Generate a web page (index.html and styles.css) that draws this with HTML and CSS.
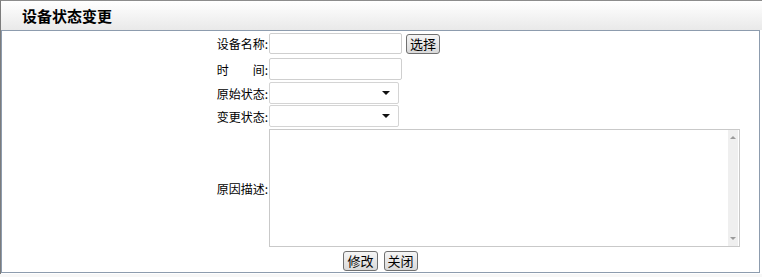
FILE: index.html
```html
<!DOCTYPE html>
<html lang="zh-CN">
<head>
    <meta charset="UTF-8">
    <title>设备状态变更</title>
    <link rel="stylesheet" href="styles.css">
</head>
<body>

    <div class="panel">
        <div class="panel-title">设备状态变更</div>

        <div class="panel-body">
            <div class="row row-name">
                <label class="label">设备名称:</label>
                <div class="field">
                    <input type="text" class="text-input">
                    <button class="btn btn-pick">选择</button>
                </div>
            </div>
            <div class="row row-time">
                <label class="label">时&emsp;&emsp;间:</label>
                <div class="field">
                    <input type="text" class="text-input">
                </div>
            </div>
            <div class="row row-old">
                <label class="label">原始状态:</label>
                <div class="field">
                    <div class="select-box"><span class="arrow"></span></div>
                </div>
            </div>
            <div class="row row-new">
                <label class="label">变更状态:</label>
                <div class="field">
                    <div class="select-box"><span class="arrow"></span></div>
                </div>
            </div>
            <div class="row row-desc">
                <label class="label">原因描述:</label>
                <div class="field">
                    <div class="memo">
                        <textarea class="memo-text"></textarea>
                        <div class="scroll">
                            <span class="scroll-up"></span>
                            <span class="scroll-down"></span>
                        </div>
                    </div>
                </div>
            </div>
            <div class="actions">
                <button class="btn">修改</button>
                <button class="btn">关闭</button>
            </div>
        </div>
    </div>

</body>
</html>
```

FILE: styles.css
```css
body {
    margin: 0;
    background: #f7f7f7;
    font-family: "Noto Sans CJK SC", "DejaVu Sans", sans-serif;
    font-size: 12px;
    color: #000;
}
.panel {
    width: 761px;
    height: 273px;
    border-top: 1px solid #8c8c8c;
    border-left: 1px solid #7c7c7c;
    background: #fff;
}
.panel-title {
    height: 29px;
    line-height: 30px;
    padding-left: 21px;
    font-size: 15px;
    font-weight: bold;
    background: linear-gradient(#ffffff, #e9e9e9);
}
.panel-body {
    width: 757px;
    height: 241px;
    border: 1px solid #8d9cae;
    background: #fff;
}
.row {
    display: flex;
    align-items: center;
}
.row-name { margin-top: 2px; height: 21px; }
.row-time { margin-top: 4px; height: 22px; }
.row-old { margin-top: 2px; height: 22px; }
.row-new { margin-top: 1px; height: 22px; }
.row-desc { margin-top: 2px; height: 118px; }
.label {
    width: 266px;
    text-align: right;
    white-space: nowrap;
}
.field {
    display: flex;
    align-items: center;
    padding-left: 1px;
}
.text-input {
    box-sizing: border-box;
    width: 133px;
    height: 21px;
    border: 1px solid #cfcfcf;
    border-radius: 2px;
    margin: 0;
}
.row-time .text-input {
    height: 22px;
}
.select-box {
    position: relative;
    box-sizing: border-box;
    width: 130px;
    height: 22px;
    border: 1px solid #d4d4d4;
    border-radius: 2px;
}
.arrow {
    position: absolute;
    right: 8px;
    top: 8px;
    border-left: 4px solid transparent;
    border-right: 4px solid transparent;
    border-top: 4px solid #111;
}
.memo {
    display: flex;
    box-sizing: border-box;
    width: 471px;
    height: 118px;
    border: 1px solid #c9c9c9;
}
.memo-text {
    flex: 1;
    border: none;
    resize: none;
    margin: 0;
    padding: 0;
    outline: none;
}
.scroll {
    width: 10px;
    margin-right: 1px;
    background: #efefef;
    display: flex;
    flex-direction: column;
    justify-content: space-between;
    align-items: center;
    padding: 6px 0 6px;
}
.scroll-up {
    border-left: 3px solid transparent;
    border-right: 3px solid transparent;
    border-bottom: 3px solid #9a9a9a;
}
.scroll-down {
    border-left: 3px solid transparent;
    border-right: 3px solid transparent;
    border-top: 3px solid #9a9a9a;
}
.btn {
    font-family: "Noto Sans CJK SC", "DejaVu Sans", sans-serif;
    font-size: 13px;
    height: 20px;
    line-height: 16px;
    padding: 0 3px;
    border: 1px solid #707070;
    border-radius: 3px;
    background: linear-gradient(#f5f5f5, #d9d9d9);
    color: #000;
    cursor: pointer;
}
.btn-pick {
    margin-left: 4px;
    height: 20px;
}
.actions {
    display: flex;
    justify-content: center;
    gap: 6px;
    margin-top: 4px;
}
```
